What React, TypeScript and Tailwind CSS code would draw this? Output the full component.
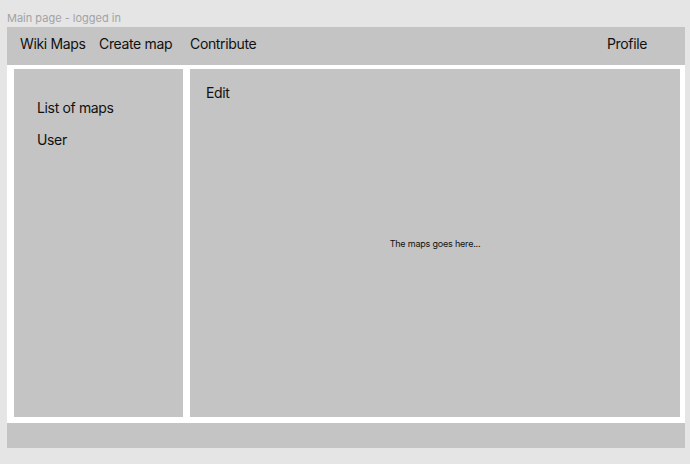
const App = () => {
  return (
    <div className="min-h-screen w-full bg-[#e5e5e5] font-['Inter','Noto_Sans',sans-serif]">
      <div className="h-[27px] pl-[7px] pt-[12px] text-[11px] leading-[13px] text-[#a3a3a3]">
        Main page - logged in
      </div>

      <div className="ml-[7px] w-[678px]">
        {/* top bar */}
        <div className="flex h-[38px] items-center bg-[#c4c4c4] pb-[5px] pl-[13px] text-[14px] leading-[17px] tracking-[-0.35px] text-[#111]">
          <span className="w-[79px]">Wiki Maps</span>
          <span className="w-[91px]">Create map</span>
          <span className="w-[417px]">Contribute</span>
          <span>Profile</span>
        </div>

        {/* body */}
        <div className="flex h-[358px] gap-[7px] bg-white pb-[6px] pl-[7px] pr-[5px] pt-[4px]">
          <aside className="flex w-[169px] flex-col bg-[#c4c4c4] pl-[23px] pt-[30px] text-[14px] leading-[17px] tracking-[-0.35px] text-[#111]">
            <span>List of maps</span>
            <span className="mt-[15px]">User</span>
          </aside>
          <main className="relative flex flex-1 items-center justify-center bg-[#c4c4c4]">
            <span className="absolute left-[16px] top-[15px] text-[14px] leading-[17px] tracking-[-0.35px] text-[#111]">Edit</span>
            <span className="text-[9px] leading-[11px] tracking-[-0.2px] text-[#111]">The maps goes here...</span>
          </main>
        </div>

        {/* footer */}
        <div className="h-[25px] bg-[#c4c4c4]" />
      </div>
    </div>
  );
};

export default App;
